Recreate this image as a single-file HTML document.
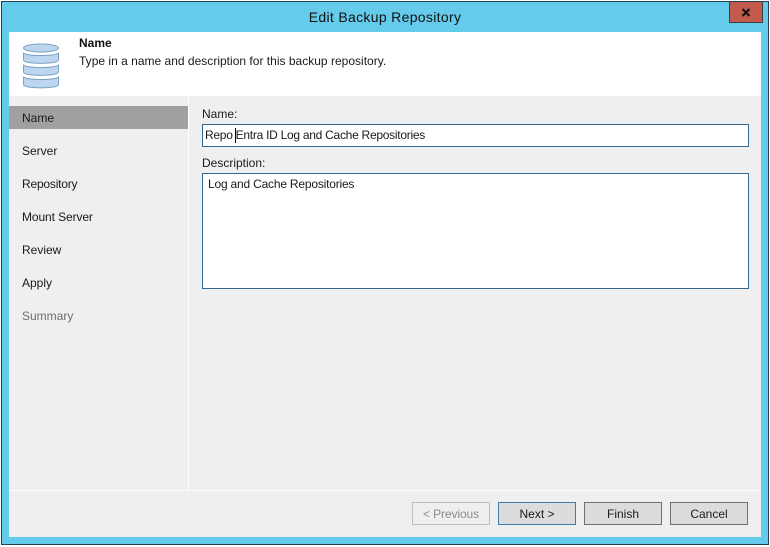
<!DOCTYPE html>
<html><head><meta charset="utf-8"><style>
html,body{margin:0;padding:0;width:770px;height:547px;overflow:hidden;background:#fff;font-family:"Liberation Sans",sans-serif;font-size:12px;color:#1a1a1a}
div{position:absolute;box-sizing:border-box}
.t{white-space:nowrap;line-height:14px}
.btn{top:502px;width:78px;height:23px;background:#dcdcdc;border:1px solid #707070;text-align:center;line-height:22px}
</style></head><body>
<div style="left:1px;top:1px;width:768px;height:544px;background:#65cbea;border:1px solid #22404f"></div>
<div class="t" style="left:0;top:9px;width:770px;text-align:center;font-size:14px;line-height:16px;color:#111;letter-spacing:.32px">Edit Backup Repository</div>
<div style="left:729px;top:2px;width:34px;height:21px;background:#c25b4d;border:1px solid #3f3f3f;border-top:0"></div>
<svg style="position:absolute;left:741px;top:8px" width="10" height="9"><path d="M1.5 1 L8.5 8 M8.5 1 L1.5 8" stroke="#111" stroke-width="2.2"/></svg>
<div style="left:9px;top:32px;width:752px;height:505px;background:#efefef"></div>
<div style="left:9px;top:32px;width:752px;height:64px;background:#fff"></div>
<svg style="position:absolute;left:21px;top:42px" width="40" height="49" viewBox="0 0 40 49">
<g fill="#bdd5ee" stroke="#7ba3c4" stroke-width="1">
<path d="M2.5 34.5 C2.5 38.5 37.5 38.5 37.5 34.5 V42.5 C37.5 47 2.5 47 2.5 42.5Z"/>
<path d="M2.5 22.5 C2.5 26.5 37.5 26.5 37.5 22.5 V30 C37.5 34.5 2.5 34.5 2.5 30Z"/>
<path d="M2.5 10.5 C2.5 14.5 37.5 14.5 37.5 10.5 V18 C37.5 22.5 2.5 22.5 2.5 18Z"/>
<ellipse cx="20" cy="6" rx="17.5" ry="4"/>
</g></svg>
<div class="t" style="left:79px;top:36px;font-weight:bold;color:#111">Name</div>
<div class="t" style="left:79px;top:54px;letter-spacing:.01px">Type in a name and description for this backup repository.</div>
<div style="left:188px;top:96px;width:1px;height:394px;background:#fff"></div>
<div style="left:9px;top:490px;width:752px;height:1px;background:#fff"></div>
<div style="left:9px;top:106px;width:179px;height:23px;background:#a0a0a0"></div>
<div class="t" style="left:22px;top:111px">Name</div>
<div class="t" style="left:22px;top:144px">Server</div>
<div class="t" style="left:22px;top:177px;letter-spacing:-.2px">Repository</div>
<div class="t" style="left:22px;top:210px;letter-spacing:-.1px">Mount Server</div>
<div class="t" style="left:22px;top:243px">Review</div>
<div class="t" style="left:22px;top:276px">Apply</div>
<div class="t" style="left:22px;top:309px;color:#6d6d6d">Summary</div>
<div class="t" style="left:202px;top:107px">Name:</div>
<div style="left:202px;top:124px;width:547px;height:23px;background:#fff;border:1px solid #35688c"></div>
<div class="t" style="left:205px;top:128px;letter-spacing:-.27px">Repo Entra ID Log and Cache Repositories</div>
<div style="left:235px;top:128px;width:1px;height:15px;background:#000"></div>
<div class="t" style="left:202px;top:156px">Description:</div>
<div style="left:202px;top:173px;width:547px;height:116px;background:#fff;border:1px solid #35688c"></div>
<div class="t" style="left:208px;top:177px;letter-spacing:-.2px">Log and Cache Repositories</div>
<div class="btn" style="left:412px;background:#efefef;border-color:#bfbfbf;color:#8a8a8a;letter-spacing:-.1px">&lt; Previous</div>
<div class="btn" style="left:498px;border-color:#3d7ba8">Next &gt;</div>
<div class="btn" style="left:584px">Finish</div>
<div class="btn" style="left:670px">Cancel</div>
</body></html>
